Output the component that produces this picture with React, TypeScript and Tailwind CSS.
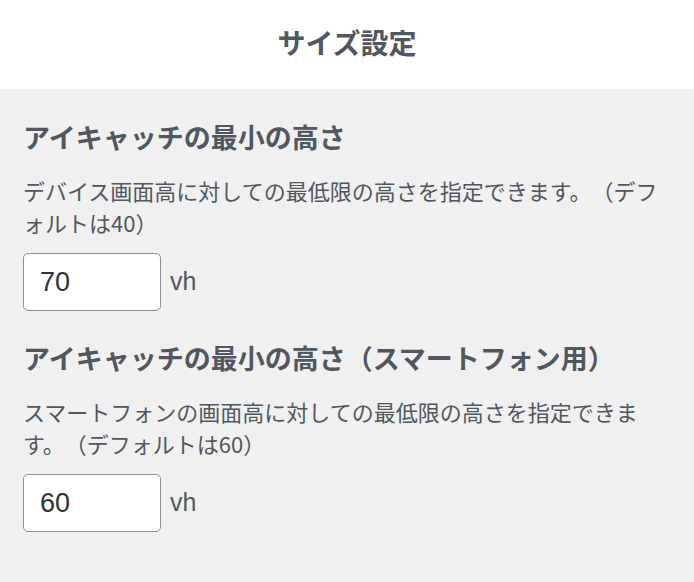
const jp = '[font-family:"Noto_Sans_CJK_JP","Noto_Sans",sans-serif]'

function SizeField({
    title,
    description,
    value,
}: {
    title: string
    description: string
    value: string
}): JSX.Element {
    return (
        <div className="flex flex-col">
            <h2 className="text-[27px] leading-[36px] font-bold text-[#50575e]">{title}</h2>
            <p className="mt-[19px] w-[648px] text-[22px] leading-[32px] text-[#50575e]">{description}</p>
            <div className="mt-[15px] flex items-center gap-[9px]">
                <input
                    type="text"
                    defaultValue={value}
                    className="h-[58px] w-[138px] rounded-[5px] border border-[#8c8f94] bg-white px-[16px] text-[27px] text-[#2c3338] [font-family:'Liberation_Sans',sans-serif] outline-none"
                />
                <span className="text-[25px] text-[#50575e] [font-family:'Liberation_Sans',sans-serif]">vh</span>
            </div>
        </div>
    )
}

export default function App(): JSX.Element {
    return (
        <div className={`flex h-[582px] w-[694px] flex-col bg-[#f0f0f0] ${jp} [text-spacing-trim:space-all]`}>
            <div className="flex h-[89px] items-center justify-center bg-white pb-[6px]">
                <h1 className="text-[28px] font-bold text-[#50575e]">サイズ設定</h1>
            </div>
            <div className="flex flex-col gap-[29px] px-[23px] pt-[30px]">
                <SizeField
                    title="アイキャッチの最小の高さ"
                    description="デバイス画面高に対しての最低限の高さを指定できます。（デフォルトは40）"
                    value="70"
                />
                <SizeField
                    title="アイキャッチの最小の高さ（スマートフォン用）"
                    description="スマートフォンの画面高に対しての最低限の高さを指定できます。（デフォルトは60）"
                    value="60"
                />
            </div>
        </div>
    )
}
